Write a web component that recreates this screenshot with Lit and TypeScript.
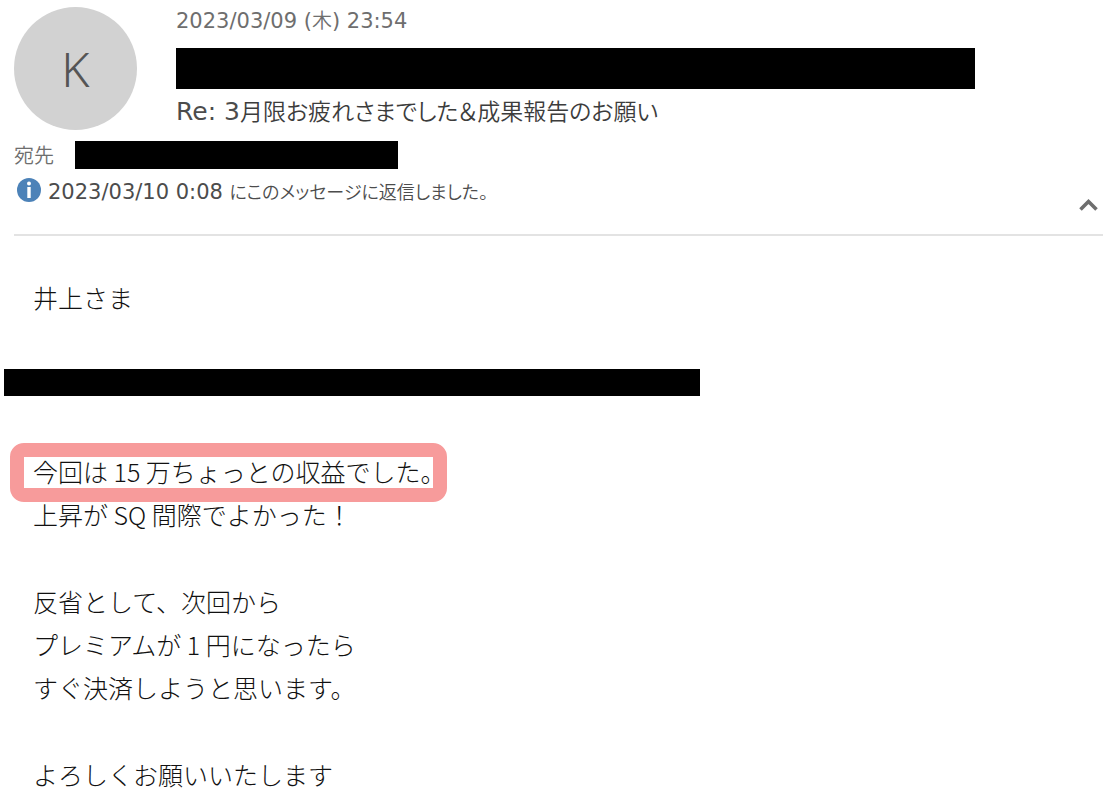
import { LitElement, html, css } from "lit";
import { customElement, state } from "lit/decorators.js";

@customElement("mail-header")
export class MailHeader extends LitElement {
  static styles = css`
    :host {
      display: block;
      margin: 0 11px 0 14px;
      border-bottom: 2px solid #e3e3e3;
      color: #6e6e6e;
      font: 21px/28px "DejaVu Sans", "Noto Sans CJK JP", sans-serif;
    }
    .top {
      display: flex;
      gap: 39px;
      padding-top: 7px;
    }
    .avatar {
      flex: none;
      display: grid;
      place-items: center;
      width: 123px;
      height: 123px;
      border-radius: 50%;
      background: #d2d2d2;
      color: #555;
      font-family: "Noto Sans", sans-serif;
      font-size: 48px;
      font-weight: 300;
    }
    .summary {
      flex: 1;
      min-width: 0;
    }
    .jp {
      font-family: "Noto Sans CJK JP", sans-serif;
      font-size: 20px;
      font-weight: 350;
      line-height: 20px;
      font-feature-settings: "palt";
    }
    .date {
      display: block;
    }
    .redacted {
      background: #000;
      max-width: 100%;
    }
    .sender {
      width: 799px;
      height: 41px;
      margin: 13px 0 6px;
    }
    .subject {
      margin: 0;
      color: #4c4c4c;
      font-size: 25px;
      line-height: 34px;
      font-weight: 400;
    }
    .subject .jp {
      color: #3c3c3c;
      font-size: 23px;
    }
    .to {
      display: flex;
      align-items: center;
      gap: 21px;
      padding-top: 11px;
    }
    .recipient {
      width: 323px;
      height: 28px;
    }
    .status {
      display: flex;
      align-items: flex-start;
      justify-content: space-between;
      padding: 7px 4px 0 3px;
      height: 58px;
      color: #4c4c4c;
    }
    .reply {
      display: flex;
      align-items: flex-start;
      gap: 7px;
      line-height: 32px;
    }
    .reply svg {
      flex: none;
      margin-top: 2px;
    }
    .reply .jp {
      font-size: 18px;
    }
    .collapse {
      margin-top: 22px;
      padding: 0;
      border: 0;
      background: none;
      line-height: 0;
      cursor: pointer;
    }
    .collapse.closed svg {
      transform: rotate(180deg);
    }
  `;

  @state() private open = true;

  render() {
    return html`
      <header>
        <div class="top">
          <div class="avatar" aria-hidden="true">K</div>
          <div class="summary">
            <time class="date" datetime="2023-03-09T23:54">2023/03/09 (<span class="jp">木</span>) 23:54</time>
            <div class="redacted sender"></div>
            <h1 class="subject">Re: 3<span class="jp">月限お疲れさまでした＆成果報告のお願い</span></h1>
          </div>
        </div>
        <div class="to"><span class="jp">宛先</span><span class="redacted recipient"></span></div>
        <div class="status">
          <div class="reply">
            <svg width="24" height="24" viewBox="0 0 24 24" aria-hidden="true">
              <circle cx="12" cy="12" r="12" fill="#4c82b8" />
              <circle cx="12" cy="5.5" r="2" fill="#fff" />
              <rect x="10.3" y="9" width="3.4" height="11" fill="#fff" />
            </svg>
            <span>2023/03/10 0:08 <span class="jp">にこのメッセージに返信しました。</span></span>
          </div>
          <button
            class="collapse ${this.open ? "" : "closed"}"
            aria-label="ヘッダーを折りたたむ"
            aria-expanded=${this.open}
            @click=${() => (this.open = !this.open)}
          >
            <svg width="20" height="14" viewBox="0 0 20 14" aria-hidden="true">
              <path d="M1.5 11.5 9.5 3.5 17.5 11.5" fill="none" stroke="#6e6e6e" stroke-width="3.6" />
            </svg>
          </button>
        </div>
      </header>
    `;
  }
}

@customElement("mail-body")
export class MailBody extends LitElement {
  static styles = css`
    :host {
      display: flex;
      flex-direction: column;
      gap: 44px;
      padding: 40px 33px 0;
      color: #111;
      font: 300 25px/43px "Noto Sans CJK JP", sans-serif;
    }
    p {
      margin: 0;
    }
    .redacted {
      width: 696px;
      max-width: 100%;
      height: 27px;
      margin: 6px 0 10px -29px;
      background: #000;
    }
    .marked {
      position: relative;
    }
    .marked::after {
      content: "";
      position: absolute;
      inset: -10px -1px -13px -23px;
      border: 14px solid #f79b9b;
      border-radius: 14px;
      pointer-events: none;
    }
  `;

  render() {
    return html`
      <p>井上さま</p>
      <div class="redacted"></div>
      <p><span class="marked">今回は 15 万ちょっとの収益でした。</span><br />上昇が SQ 間際でよかった！</p>
      <p>反省として、次回から<br />プレミアムが 1 円になったら<br />すぐ決済しようと思います。</p>
      <p>よろしくお願いいたします</p>
    `;
  }
}

@customElement("app-root")
export class AppRoot extends LitElement {
  static styles = css`
    :host {
      display: block;
      min-height: 100vh;
      background: #fff;
    }
  `;

  render() {
    return html`<mail-header></mail-header><mail-body></mail-body>`;
  }
}
